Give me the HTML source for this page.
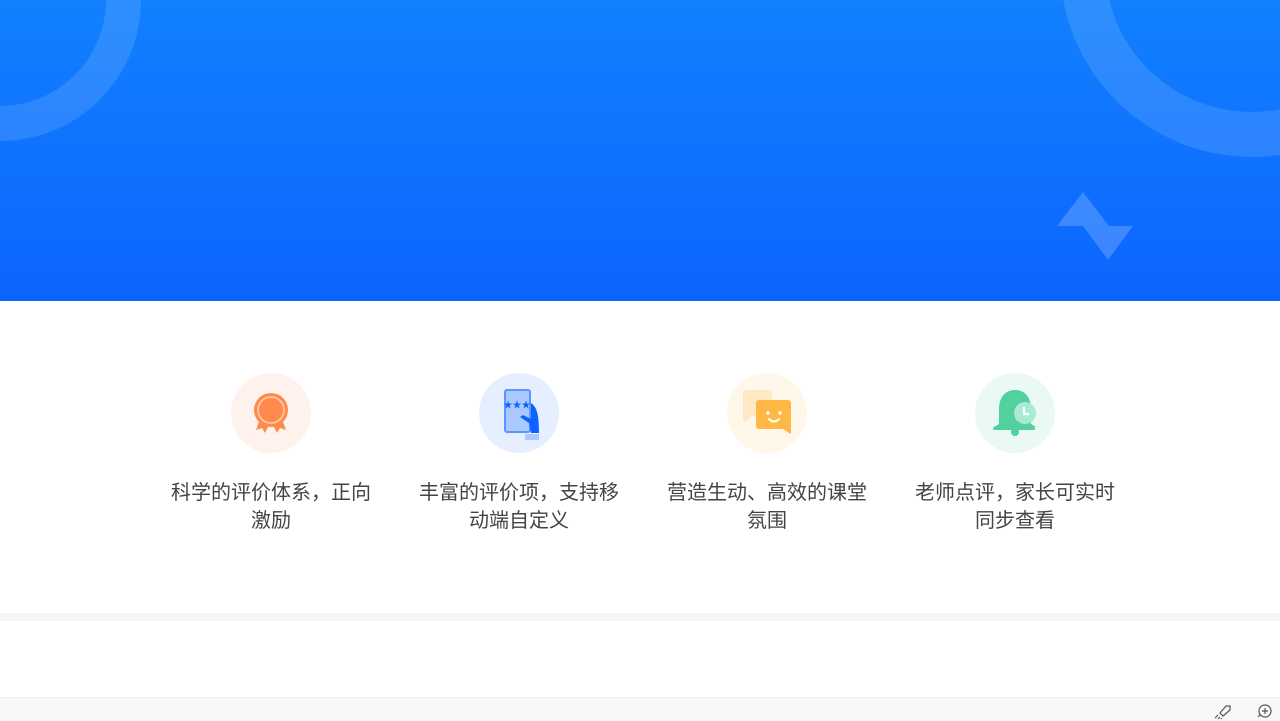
<!DOCTYPE html>
<html><head><meta charset="utf-8"><style>
body{margin:0;width:1280px;height:720px;overflow:hidden;background:#fff;font-family:"Liberation Sans","Noto Sans CJK SC",sans-serif;position:relative}
.hero{position:absolute;left:0;top:0;width:1280px;height:301px;background:linear-gradient(#1281fe,#0b64ff);overflow:hidden}
.item{position:absolute;top:373px;width:220px;text-align:center}
.ic{width:80px;height:80px;border-radius:50%;margin:0 auto;position:relative}
.t{margin-top:26px;font-size:20px;line-height:28px;color:#444}
</style></head><body>
<div class="hero">
<svg width="1280" height="301" style="position:absolute;left:0;top:0">
<circle cx="0" cy="0" r="123.5" fill="none" stroke="rgba(255,255,255,0.12)" stroke-width="35"/>
<circle cx="1252" cy="-35" r="169.5" fill="none" stroke="rgba(255,255,255,0.12)" stroke-width="45"/>
<polygon points="1083,192 1109,226 1057,226" fill="rgba(255,255,255,0.2)"/>
<polygon points="1083,226 1133,226 1108,260" fill="rgba(255,255,255,0.2)"/>
</svg>
</div>
<div class="item" style="left:161px"><div class="ic" style="background:#fff2ec"><svg width="80" height="80">
<path d="M29 46 L25 57 L31 55 L34 60 L39 50Z M51 46 L55 57 L49 55 L46 60 L41 50Z" fill="#ff8a4c"/>
<circle cx="40" cy="37" r="17" fill="#ff8a4c"/><circle cx="40" cy="37" r="13" fill="none" stroke="#ffd0b5" stroke-width="1.5"/></svg></div><div class="t">科学的评价体系，正向<br>激励</div></div>
<div class="item" style="left:409px"><div class="ic" style="background:#e5efff"><svg width="80" height="80">
<rect x="26" y="17" width="25" height="42" rx="2" fill="#a9c9ff" stroke="#5b95ff" stroke-width="2"/>
<text x="38" y="35" font-size="9" fill="#0d63ff" text-anchor="middle">★★★</text>
<path d="M52 30 C58 34 60 42 60 60 L52 60 L50 50 L41 44 L44 42 L52 46Z" fill="#0d63ff"/>
<rect x="46" y="61" width="14" height="6" fill="#a9c9ff"/></svg></div><div class="t">丰富的评价项，支持移<br>动端自定义</div></div>
<div class="item" style="left:657px"><div class="ic" style="background:#fff7ea"><svg width="80" height="80">
<path d="M17 17 h24 a4 4 0 0 1 4 4 v22 h-20 l-6 5 a2 2 0 0 1 -3-1 v-26 a4 4 0 0 1 4-4z" fill="#ffe8c4"/>
<path d="M32 27 h29 a3 3 0 0 1 3 3 v29 a1 1 0 0 1-2 1 l-6-4 h-24 a3 3 0 0 1-3-3 v-23 a3 3 0 0 1 3-3z" fill="#ffb845"/>
<circle cx="41" cy="40" r="1.7" fill="#fff"/><circle cx="53" cy="40" r="1.7" fill="#fff"/>
<path d="M42 46 q5 5 10 0" fill="none" stroke="#fff" stroke-width="2" stroke-linecap="round"/></svg></div><div class="t">营造生动、高效的课堂<br>氛围</div></div>
<div class="item" style="left:905px"><div class="ic" style="background:#eaf9f3"><svg width="80" height="80">
<path d="M40 17 c-11 0-16 9-16 19 v15 l-5 3 h42 l-5-3 v-15 c0-10-5-19-16-19z" fill="#52d19f"/>
<rect x="18" y="54" width="42" height="3" rx="1.5" fill="#52d19f"/>
<circle cx="40" cy="59" r="4" fill="#52d19f"/>
<circle cx="50" cy="40" r="11" fill="#a8ebd2"/><path d="M49 34 v7 h5" fill="none" stroke="#fff" stroke-width="2.2"/></svg></div><div class="t">老师点评，家长可实时<br>同步查看</div></div>
<div style="position:absolute;left:0;top:613px;width:1280px;height:8px;background:#f5f6f7"></div>
<div style="position:absolute;left:0;top:697px;width:1280px;height:23px;background:#f8f8f8;border-top:1px solid #ececec"></div>
<svg width="60" height="20" style="position:absolute;left:1212px;top:701px" fill="none" stroke="#555" stroke-width="1.2">
<path d="M8 12 l6-7 h4 v4 l-7 6z M6 14 l-3 3 M8 16 l-2 2 M10 17 l-1 1"/>
<circle cx="53" cy="10" r="6"/><path d="M53 7v6M50 10h6M46 16 l3-3"/></svg>
</body></html>
